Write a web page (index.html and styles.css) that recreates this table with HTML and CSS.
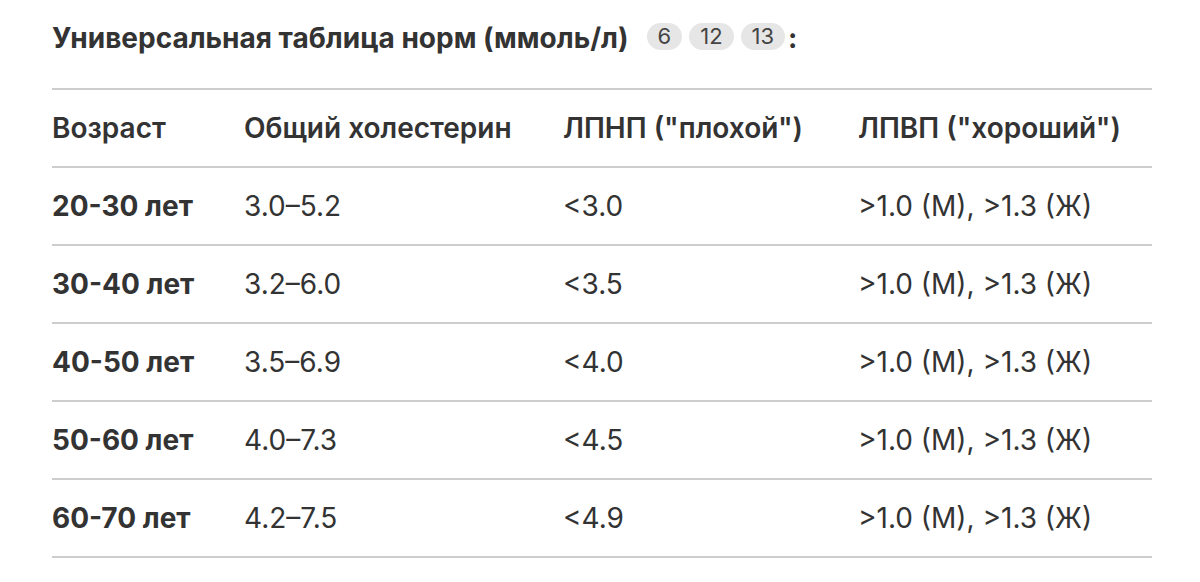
FILE: index.html
```html
<!DOCTYPE html>
<html lang="ru">
<head>
<meta charset="utf-8">
<link rel="stylesheet" href="styles.css">
</head>
<body>
<div class="page">
  <h3 class="title">Универсальная таблица норм (ммоль/л) <span class="refs"><span class="ref">6</span><span class="ref">12</span><span class="ref">13</span></span>:</h3>
  <table class="norms">
    <colgroup>
      <col class="c1"><col class="c2"><col class="c3"><col class="c4">
    </colgroup>
    <thead>
      <tr><th>Возраст</th><th>Общий холестерин</th><th>ЛПНП ("плохой")</th><th>ЛПВП ("хороший")</th></tr>
    </thead>
    <tbody>
      <tr><td class="age">20-30 лет</td><td>3.0–5.2</td><td>&lt;3.0</td><td>&gt;1.0 (М), &gt;1.3 (Ж)</td></tr>
      <tr><td class="age">30-40 лет</td><td>3.2–6.0</td><td>&lt;3.5</td><td>&gt;1.0 (М), &gt;1.3 (Ж)</td></tr>
      <tr><td class="age">40-50 лет</td><td>3.5–6.9</td><td>&lt;4.0</td><td>&gt;1.0 (М), &gt;1.3 (Ж)</td></tr>
      <tr><td class="age">50-60 лет</td><td>4.0–7.3</td><td>&lt;4.5</td><td>&gt;1.0 (М), &gt;1.3 (Ж)</td></tr>
      <tr><td class="age">60-70 лет</td><td>4.2–7.5</td><td>&lt;4.9</td><td>&gt;1.0 (М), &gt;1.3 (Ж)</td></tr>
    </tbody>
  </table>
</div>
</body>
</html>
```

FILE: styles.css
```css
html, body {
  margin: 0;
  padding: 0;
  background: #ffffff;
}
body {
  font-family: Inter, "Liberation Sans", Arial, sans-serif;
  color: #333333;
}
.page {
  padding: 20px 48px 0 52px;
}
.title {
  margin: 0;
  font-size: 28px;
  font-weight: 700;
  line-height: 36px;
  color: #333333;
  display: flex;
  align-items: center;
}
.refs {
  display: inline-flex;
  gap: 7px;
  margin-left: 18px;
  margin-right: 3px;
  margin-top: -4px;
}
.ref {
  display: inline-flex;
  align-items: center;
  justify-content: center;
  height: 27px;
  min-width: 35px;
  padding: 0 11px;
  box-sizing: border-box;
  border-radius: 14px;
  background: #e6e6e6;
  color: #444444;
  font-size: 22px;
  font-weight: 400;
}
.norms {
  margin-top: 32px;
  width: 1100px;
  border-collapse: collapse;
  table-layout: fixed;
  border-top: 2px solid #cdcdcd;
}
.c1 { width: 192px; }
.c2 { width: 319px; }
.c3 { width: 295px; }
.c4 { width: 294px; }
.norms th, .norms td {
  padding: 0;
  height: 76px;
  text-align: left;
  vertical-align: middle;
  font-size: 28px;
  border-bottom: 2px solid #cdcdcd;
}
.norms th {
  font-weight: 600;
}
.norms td {
  font-weight: 400;
}
.norms td.age {
  font-weight: 700;
}
```
